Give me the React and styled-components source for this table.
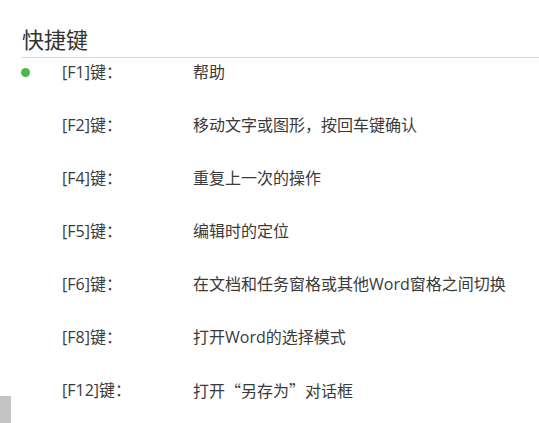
import React from 'react';
import styled, { createGlobalStyle } from 'styled-components';

const shortcuts = [
  { key: '[F1]键：', desc: ['帮助'], active: true },
  { key: '[F2]键：', desc: ['移动文字或图形，按回车键确认'] },
  { key: '[F4]键：', desc: ['重复上一次的操作'] },
  { key: '[F5]键：', desc: ['编辑时的定位'] },
  { key: '[F6]键：', desc: ['在文档和任务窗格或其他Word窗格之间切换'] },
  { key: '[F8]键：', desc: ['打开Word的选择模式'] },
  { key: '[F12]键：', desc: ['打开', '“', '另存为', '”', '对话框'] },
];

// 中文引号用中文字体，才是全角宽度
const isQuote = (s) => s === '“' || s === '”';

export default function App() {
  return (
    <>
      <GlobalStyle />
      <Page>
        <Header>
          <Title>快捷键</Title>
        </Header>
        <List>
          {shortcuts.map((item) => (
            <Row key={item.key}>
              <Dot $active={item.active} />
              <Key>{item.key}</Key>
              <Desc>
                {item.desc.map((part, i) =>
                  isQuote(part) ? <Quote key={i}>{part}</Quote> : part
                )}
              </Desc>
            </Row>
          ))}
        </List>
      </Page>
      <ScrollThumb />
    </>
  );
}

const GlobalStyle = createGlobalStyle`
  body {
    margin: 0;
    background: #fff;
    font-family: "Open Sans", "Noto Sans CJK SC", sans-serif;
    color: #333;
  }
`;

const Page = styled.section`
  padding-left: 22px;
`;

const Header = styled.div`
  padding-top: 24px;
  padding-bottom: 3px;
  border-bottom: 1px solid #d6d6d6;
`;

const Title = styled.h2`
  margin: 0;
  font-size: 22px;
  line-height: 30px;
  font-weight: 400;
  color: #333;
`;

const List = styled.ul`
  list-style: none;
  margin: 4px 0 0;
  padding: 0;
  display: flex;
  flex-direction: column;
  gap: 33px;
`;

const Row = styled.li`
  display: flex;
  align-items: center;
  height: 20px;
  font-size: 16px;
  line-height: 20px;
`;

const Dot = styled.span`
  width: 9px;
  height: 9px;
  border-radius: 50%;
  background: ${(p) => (p.$active ? '#4cb944' : 'transparent')};
  margin-left: -1px;
  margin-right: 32px;
  flex-shrink: 0;
`;

const Key = styled.span`
  width: 131px;
  flex-shrink: 0;
  color: #3a3a3a;
`;

const Desc = styled.span`
  color: #3a3a3a;
  white-space: nowrap;
`;

const Quote = styled.span`
  font-family: "Noto Sans CJK SC", sans-serif;
`;

const ScrollThumb = styled.div`
  position: fixed;
  left: 0;
  bottom: 0;
  width: 11px;
  height: 27px;
  background: #c4c4c4;
`;
